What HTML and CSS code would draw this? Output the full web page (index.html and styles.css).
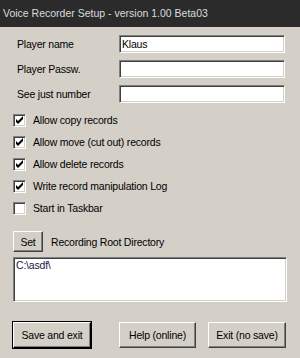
FILE: index.html
```html
<!DOCTYPE html>
<html lang="en">
<head>
  <meta charset="UTF-8" />
  <title>Voice Recorder Setup</title>
  <link rel="stylesheet" href="styles.css">
</head>
<body>
  <div class="window">
    <div class="titlebar">Voice Recorder Setup - version 1.00 Beta03</div>

    <div class="content">
      <div class="fields">
        <div class="field">
          <label for="player-name">Player name</label>
          <input type="text" id="player-name" value="Klaus" />
        </div>
        <div class="field">
          <label for="player-pass">Player Passw.</label>
          <input type="text" id="player-pass" />
        </div>
        <div class="field">
          <label for="see-number">See just number</label>
          <input type="text" id="see-number" />
        </div>
      </div>

      <div class="checks">
        <div class="check"><span class="box checked"></span>Allow copy records</div>
        <div class="check"><span class="box checked"></span>Allow move (cut out) records</div>
        <div class="check"><span class="box checked"></span>Allow delete records</div>
        <div class="check"><span class="box checked"></span>Write record manipulation Log</div>
        <div class="check"><span class="box"></span>Start in Taskbar</div>
      </div>

      <div class="dir-row">
        <button class="btn set-btn">Set</button>
        <span class="dir-label">Recording Root Directory</span>
      </div>

      <div class="dir-box">C:\asdf\</div>

      <div class="actions">
        <button class="btn default save-btn">Save and exit</button>
        <button class="btn help-btn">Help (online)</button>
        <button class="btn exit-btn">Exit (no save)</button>
      </div>
    </div>
  </div>
</body>
</html>
```

FILE: styles.css
```css
body {
  margin: 0;
  font-family: Tahoma, 'Liberation Sans', Arial, sans-serif;
  font-size: 10.5px;
  letter-spacing: -0.2px;
  color: #000;
  background: #d4d0c8;
}

.window {
  width: 300px;
  height: 358px;
  background: #d4d0c8;
  overflow: hidden;
}

.titlebar {
  height: 27px;
  line-height: 26px;
  padding-left: 3px;
  background: #2b2b2b;
  color: #dcdcdc;
  letter-spacing: 0;
}

.content {
  padding: 8px 0 0 13px;
}

.fields {
  display: flex;
  flex-direction: column;
  gap: 7px;
}

.field {
  display: flex;
  align-items: center;
  height: 18px;
}

.field label {
  width: 102px;
  padding-left: 4px;
}

.field input {
  box-sizing: border-box;
  width: 166px;
  height: 18px;
  margin: 0;
  padding: 0 2px;
  font: inherit;
  letter-spacing: inherit;
  background: #fff;
  border-top: 1px solid #808080;
  border-left: 1px solid #808080;
  border-right: 1px solid #fff;
  border-bottom: 1px solid #fff;
  box-shadow: inset 1px 1px 0 #404040, inset -1px -1px 0 #d4d0c8;
  outline: none;
}

.checks {
  margin-top: 6px;
}

.check {
  display: flex;
  align-items: center;
  height: 22px;
}

.box {
  box-sizing: border-box;
  width: 13px;
  height: 13px;
  margin-right: 7px;
  background: #fff;
  border-top: 1px solid #808080;
  border-left: 1px solid #808080;
  border-right: 1px solid #fff;
  border-bottom: 1px solid #fff;
  box-shadow: inset 1px 1px 0 #404040, inset -1px -1px 0 #d4d0c8;
}

.box.checked {
  background: #fff url("data:image/svg+xml,%3Csvg xmlns='http://www.w3.org/2000/svg' width='11' height='11'%3E%3Cpath d='M2 4v3l2 2 5-5V1L4 6z' fill='%23000'/%3E%3C/svg%3E") no-repeat 0 0;
}

.dir-row {
  display: flex;
  align-items: center;
  margin-top: 12px;
  height: 21px;
}

.btn {
  box-sizing: border-box;
  margin: 0;
  padding: 0;
  font: inherit;
  letter-spacing: inherit;
  color: #000;
  background: #d4d0c8;
  border-top: 1px solid #fff;
  border-left: 1px solid #fff;
  border-right: 1px solid #404040;
  border-bottom: 1px solid #404040;
  box-shadow: inset -1px -1px 0 #808080;
  cursor: pointer;
}

.btn.default {
  outline: 1px solid #000;
  outline-offset: 0;
  border-right-color: #000;
  border-bottom-color: #000;
}

.set-btn {
  width: 30px;
  height: 21px;
}

.dir-label {
  margin-left: 8px;
}

.dir-box {
  box-sizing: border-box;
  width: 274px;
  height: 45px;
  margin-top: 5px;
  padding: 1px 2px;
  background: #fff;
  color: #1a1a40;
  border-top: 1px solid #808080;
  border-left: 1px solid #808080;
  border-right: 1px solid #fff;
  border-bottom: 1px solid #fff;
  box-shadow: inset 1px 1px 0 #404040, inset -1px -1px 0 #d4d0c8;
}

.actions {
  display: flex;
  margin-top: 20px;
}

.actions .btn {
  height: 26px;
}

.save-btn {
  width: 78px;
}

.help-btn {
  width: 77px;
  margin-left: 28px;
}

.exit-btn {
  width: 78px;
  margin-left: 12px;
}
```
